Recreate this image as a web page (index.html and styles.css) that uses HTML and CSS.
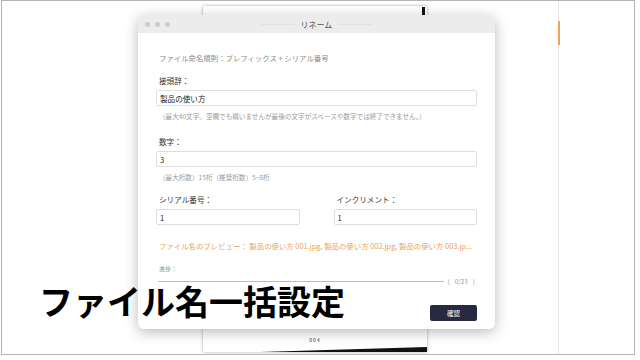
FILE: index.html
```html
<!DOCTYPE html>
<html lang="ja">
<head>
  <meta charset="UTF-8" />
  <meta name="viewport" content="width=device-width, initial-scale=1.0"/>
  <title>リネーム</title>
  <link rel="stylesheet" href="styles.css">
</head>
<body>

<div class="screen">

  <div class="workspace">
    <div class="main">
      <div class="page">
        <div class="page-tab"></div>
        <div class="page-foot">
          <span class="page-no">004</span>
          <svg class="page-edge" width="224" height="5" viewBox="0 0 224 5">
            <polygon points="57,5 224,0 224,5" fill="#111"/>
          </svg>
        </div>
      </div>
    </div>
    <aside class="side">
      <div class="side-accent"></div>
    </aside>
  </div>

  <!-- rename dialog -->
  <div class="dialog">
    <div class="titlebar">
      <div class="dots">
        <span></span><span></span><span></span>
      </div>
      <div class="title">リネーム</div>
      <div></div>
    </div>

    <div class="dialog-body">
      <p class="rule">ファイル命名規則：プレフィックス + シリアル番号</p>

      <label class="label" for="prefix">接頭辞：</label>
      <input class="field" id="prefix" type="text" value="製品の使い方"/>
      <p class="hint">（最大40文字。空欄でも構いませんが最後の文字がスペースや数字では終了できません。）</p>

      <label class="label gap" for="digits">数字：</label>
      <input class="field" id="digits" type="text" value="3"/>
      <p class="hint">（最大桁数）15桁（推奨桁数）5~8桁</p>

      <div class="pair">
        <div>
          <label class="label" for="serial">シリアル番号：</label>
          <input class="field" id="serial" type="text" value="1"/>
        </div>
        <div>
          <label class="label" for="step">インクリメント：</label>
          <input class="field" id="step" type="text" value="1"/>
        </div>
      </div>

      <p class="preview">ファイル名のプレビュー： 製品の使い方 001.jpg, 製品の使い方 002.jpg, 製品の使い方 003.jp...</p>

      <p class="progress-label">進捗：</p>
      <div class="progress">
        <div class="progress-line"></div>
        <div class="progress-count"><span>(</span><span>0/23</span><span>)</span></div>
      </div>

      <div class="actions">
        <button class="btn">確認</button>
      </div>
    </div>
  </div>

  <div class="caption">ファイル名一括設定</div>

</div>

</body>
</html>
```

FILE: styles.css
```css
:root {
  --frame: #b4b4b4;
  --text: #333;
  --muted: #8a8a8a;
  --orange: #eb9f55;
  --navy: #262a3e;
}
* {
  box-sizing: border-box;
}
body {
  margin: 0;
  background: #fff;
  font-family: "Noto Sans CJK JP", "Noto Sans", sans-serif;
  color: var(--text);
}
p {
  margin: 0;
}
.screen {
  position: relative;
  margin-left: 1px;
  width: 634px;
  height: 355px;
  border: 1px solid var(--frame);
  overflow: hidden;
}
.workspace {
  display: flex;
  height: 100%;
}
.main {
  flex: 1;
}
.page {
  display: flex;
  flex-direction: column;
  justify-content: space-between;
  margin: 5px 0 0 201px;
  width: 224px;
  height: 346px;
  background: #fff;
  box-shadow: 0 0 3px rgba(0,0,0,0.35);
}
.page-tab {
  align-self: flex-end;
  margin: 1px 2px 0 0;
  width: 3px;
  height: 8px;
  background: #111;
}
.page-foot {
  display: flex;
  flex-direction: column;
  align-items: center;
}
.page-no {
  font-size: 5px;
  line-height: 6px;
  letter-spacing: 1px;
  color: #444;
}
.page-edge {
  display: block;
  margin-top: 4px;
}
.side {
  width: 76px;
  border-left: 1px solid #e6e6e6;
}
.side-accent {
  margin: 20px 0 0 -1.5px;
  width: 2px;
  height: 24px;
  background: #f2a455;
}

/* dialog */
.dialog {
  position: absolute;
  left: 136px;
  top: 14px;
  width: 357px;
  height: 314px;
  background: #fff;
  border-radius: 6px;
  box-shadow: 0 3px 14px rgba(0,0,0,0.28);
  overflow: hidden;
}
.titlebar {
  display: grid;
  grid-template-columns: 1fr auto 1fr;
  align-items: center;
  height: 18px;
  background: #ececec;
}
.dots {
  display: flex;
  gap: 5px;
  padding-left: 7px;
}
.dots span {
  width: 5px;
  height: 5px;
  border-radius: 50%;
  background: #cdcdcd;
}
.title {
  display: flex;
  align-items: center;
  gap: 6px;
  font-size: 8px;
  color: #555;
}
.title::before,
.title::after {
  content: "";
  width: 34px;
  border-top: 1px solid #e0e0e0;
}
.dialog-body {
  padding: 19px 18px 8px;
}
.rule {
  padding-left: 3px;
  font-size: 7.4px;
  line-height: 11px;
  color: var(--muted);
}
.label {
  display: block;
  margin-top: 12px;
  padding-left: 3px;
  font-size: 7.6px;
  line-height: 11px;
  color: var(--text);
}
.label.gap {
  margin-top: 14px;
}
.field {
  display: block;
  margin-top: 4px;
  width: 100%;
  height: 16px;
  padding: 0 3px;
  border: 1px solid #dedede;
  border-radius: 2px;
  font: inherit;
  font-size: 7.6px;
  color: #222;
  background: #fff;
  outline: none;
}
.hint {
  margin-top: 5px;
  padding-left: 3px;
  font-size: 6.6px;
  line-height: 11px;
  color: #9a9a9a;
}
.pair {
  display: grid;
  grid-template-columns: 1fr 1fr;
  column-gap: 34px;
}
.pair .label {
  margin-top: 11px;
}
.preview {
  margin-top: 15px;
  padding-left: 3px;
  font-size: 7.4px;
  line-height: 11px;
  color: var(--orange);
  white-space: nowrap;
}
.progress-label {
  margin-top: 12px;
  padding-left: 3px;
  font-size: 6px;
  line-height: 11px;
  color: #999;
}
.progress {
  display: flex;
  align-items: center;
  margin-top: 2px;
  height: 11px;
  padding-left: 2px;
}
.progress-line {
  flex: 1;
  border-top: 1px solid #bdbdbd;
}
.progress-count {
  display: flex;
  gap: 5px;
  margin-left: 4px;
  padding-right: 2px;
  font-size: 6.4px;
  color: #999;
}
.actions {
  display: flex;
  justify-content: flex-end;
  margin-top: 18px;
}
.btn {
  width: 47px;
  height: 16px;
  padding: 0;
  border: none;
  border-radius: 2px;
  background: var(--navy);
  color: #fff;
  font: inherit;
  font-size: 6.5px;
}

/* overlay title */
.caption {
  position: absolute;
  left: 37px;
  top: 283px;
  font-size: 34px;
  line-height: 1;
  font-weight: 700;
  color: #000;
  white-space: nowrap;
}
```
